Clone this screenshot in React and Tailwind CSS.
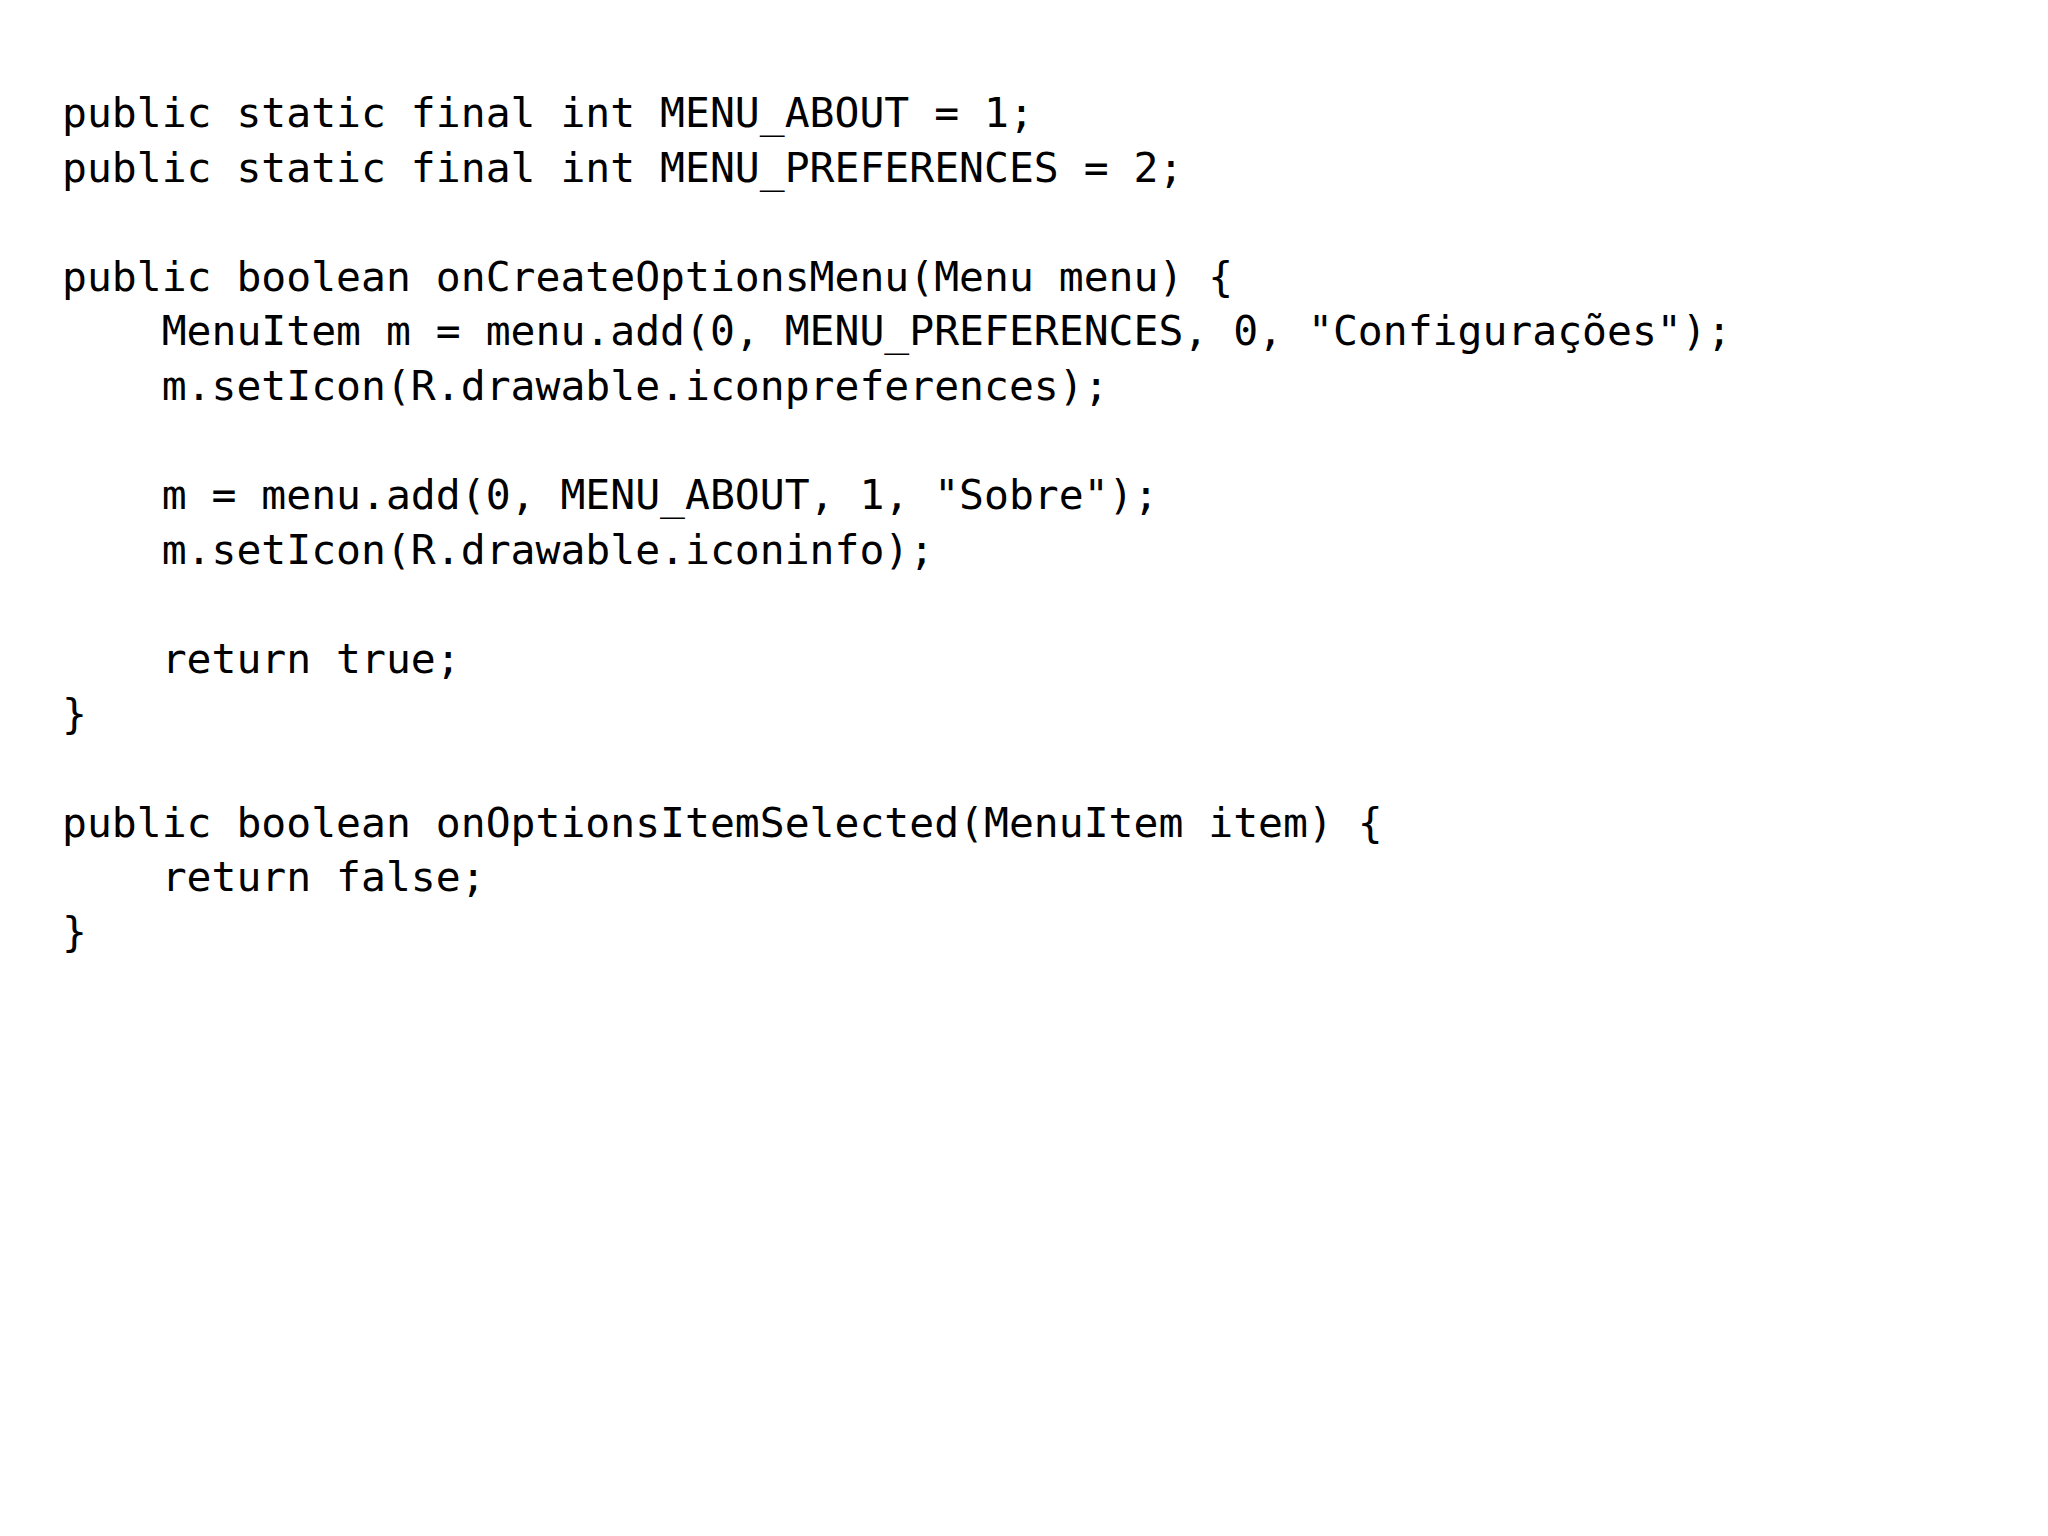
const code = `public static final int MENU_ABOUT = 1;
public static final int MENU_PREFERENCES = 2;

public boolean onCreateOptionsMenu(Menu menu) {
    MenuItem m = menu.add(0, MENU_PREFERENCES, 0, "Configurações");
    m.setIcon(R.drawable.iconpreferences);

    m = menu.add(0, MENU_ABOUT, 1, "Sobre");
    m.setIcon(R.drawable.iconinfo);

    return true;
}

public boolean onOptionsItemSelected(MenuItem item) {
    return false;
}`;

export default function App() {
  return (
    <div className="w-[2048px] h-[1536px] bg-white pl-[62px] pt-[86px]">
      <pre className="m-0 whitespace-pre text-black font-['DejaVu_Sans_Mono',monospace] text-[41.4px] leading-[54.6px]">
        {code}
      </pre>
    </div>
  );
}
